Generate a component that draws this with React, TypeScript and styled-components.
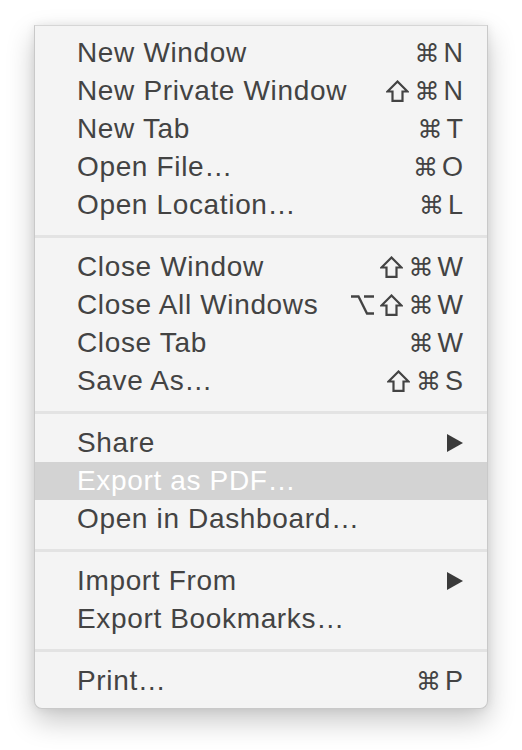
import React from "react";
import styled, { createGlobalStyle } from "styled-components";

const Global = createGlobalStyle`
  html, body { margin: 0; padding: 0; background: #ffffff; }
  body { font-family: "Liberation Sans", Arial, sans-serif; }
`;

const Page = styled.div`
  padding: 25px 0 0 34px;
  width: 522px;
  height: 750px;
  box-sizing: border-box;
`;

const Menu = styled.div`
  width: 454px;
  box-sizing: border-box;
  background: #f4f4f4;
  border: 1px solid #c9c9c9;
  border-top-color: #d6d6d6;
  border-radius: 0 0 8px 8px;
  padding: 8px 0 8px;
  box-shadow: 0 12px 28px rgba(0, 0, 0, 0.22), 0 0 10px rgba(0, 0, 0, 0.08);
`;

const Row = styled.div<{ $active?: boolean }>`
  height: 38px;
  display: flex;
  align-items: center;
  justify-content: space-between;
  padding: 0 24px 0 42px;
  background: ${(p) => (p.$active ? "#d3d3d3" : "transparent")};
  color: ${(p) => (p.$active ? "#ffffff" : "#434343")};
  font-size: 28px;
  letter-spacing: 0.65px;
  white-space: nowrap;
`;

const Label = styled.span``;

const Shortcut = styled.span`
  display: flex;
  align-items: center;
  font-size: 27px;
  letter-spacing: 0;
  color: #434343;
`;

const Cmd = styled.span`
  font-family: "DejaVu Sans", sans-serif;
  font-size: 25px;
  margin-right: 4px;
`;

const ModIcon = styled.svg`
  width: 23px;
  height: 22px;
  display: block;
  margin-right: 6px;
`;

const Key = styled.span`
  font-family: "Liberation Sans", Arial, sans-serif;
`;

const Separator = styled.div`
  height: 24px;
  display: flex;
  align-items: center;
  &::after {
    content: "";
    display: block;
    width: 100%;
    height: 3px;
    background: #e3e3e3;
  }
`;

const Arrow = styled.svg`
  width: 16px;
  height: 18px;
  display: block;
`;

const ShiftIcon = () => (
  <ModIcon viewBox="0 0 23 22">
    <path
      d="M11.5 1.5 L1.5 11.5 L6.5 11.5 L6.5 20.8 L16.5 20.8 L16.5 11.5 L21.5 11.5 Z"
      fill="none"
      stroke="#434343"
      strokeWidth="2.2"
      strokeLinejoin="miter"
    />
  </ModIcon>
);

const OptionIcon = () => (
  <ModIcon viewBox="0 0 23 22">
    <path
      d="M0 2.5 L7.5 2.5 L16 19.5 L23 19.5 M13 2.5 L23 2.5"
      fill="none"
      stroke="#434343"
      strokeWidth="2.3"
    />
  </ModIcon>
);

type Mod = "cmd" | "shift" | "opt";

type Item = {
  label: string;
  mods?: Mod[];
  key?: string;
  submenu?: boolean;
  active?: boolean;
};

const groups: Item[][] = [
  [
    { label: "New Window", mods: ["cmd"], key: "N" },
    { label: "New Private Window", mods: ["shift", "cmd"], key: "N" },
    { label: "New Tab", mods: ["cmd"], key: "T" },
    { label: "Open File…", mods: ["cmd"], key: "O" },
    { label: "Open Location…", mods: ["cmd"], key: "L" },
  ],
  [
    { label: "Close Window", mods: ["shift", "cmd"], key: "W" },
    { label: "Close All Windows", mods: ["opt", "shift", "cmd"], key: "W" },
    { label: "Close Tab", mods: ["cmd"], key: "W" },
    { label: "Save As…", mods: ["shift", "cmd"], key: "S" },
  ],
  [
    { label: "Share", submenu: true },
    { label: "Export as PDF…", active: true },
    { label: "Open in Dashboard…" },
  ],
  [
    { label: "Import From", submenu: true },
    { label: "Export Bookmarks…" },
  ],
  [{ label: "Print…", mods: ["cmd"], key: "P" }],
];

const renderMod = (m: Mod, i: number) => {
  if (m === "shift") return <ShiftIcon key={i} />;
  if (m === "opt") return <OptionIcon key={i} />;
  return <Cmd key={i}>⌘</Cmd>;
};

export default function App() {
  return (
    <Page>
      <Global />
      <Menu>
        {groups.map((g, gi) => (
          <React.Fragment key={gi}>
            {gi > 0 && <Separator />}
            {g.map((it) => (
              <Row key={it.label} $active={it.active}>
                <Label>{it.label}</Label>
                {it.key && (
                  <Shortcut>
                    {it.mods?.map(renderMod)}
                    <Key>{it.key}</Key>
                  </Shortcut>
                )}
                {it.submenu && (
                  <Arrow viewBox="0 0 16 18">
                    <path d="M0 0 L16 9 L0 18 Z" fill="#3a3a3a" />
                  </Arrow>
                )}
              </Row>
            ))}
          </React.Fragment>
        ))}
      </Menu>
    </Page>
  );
}
